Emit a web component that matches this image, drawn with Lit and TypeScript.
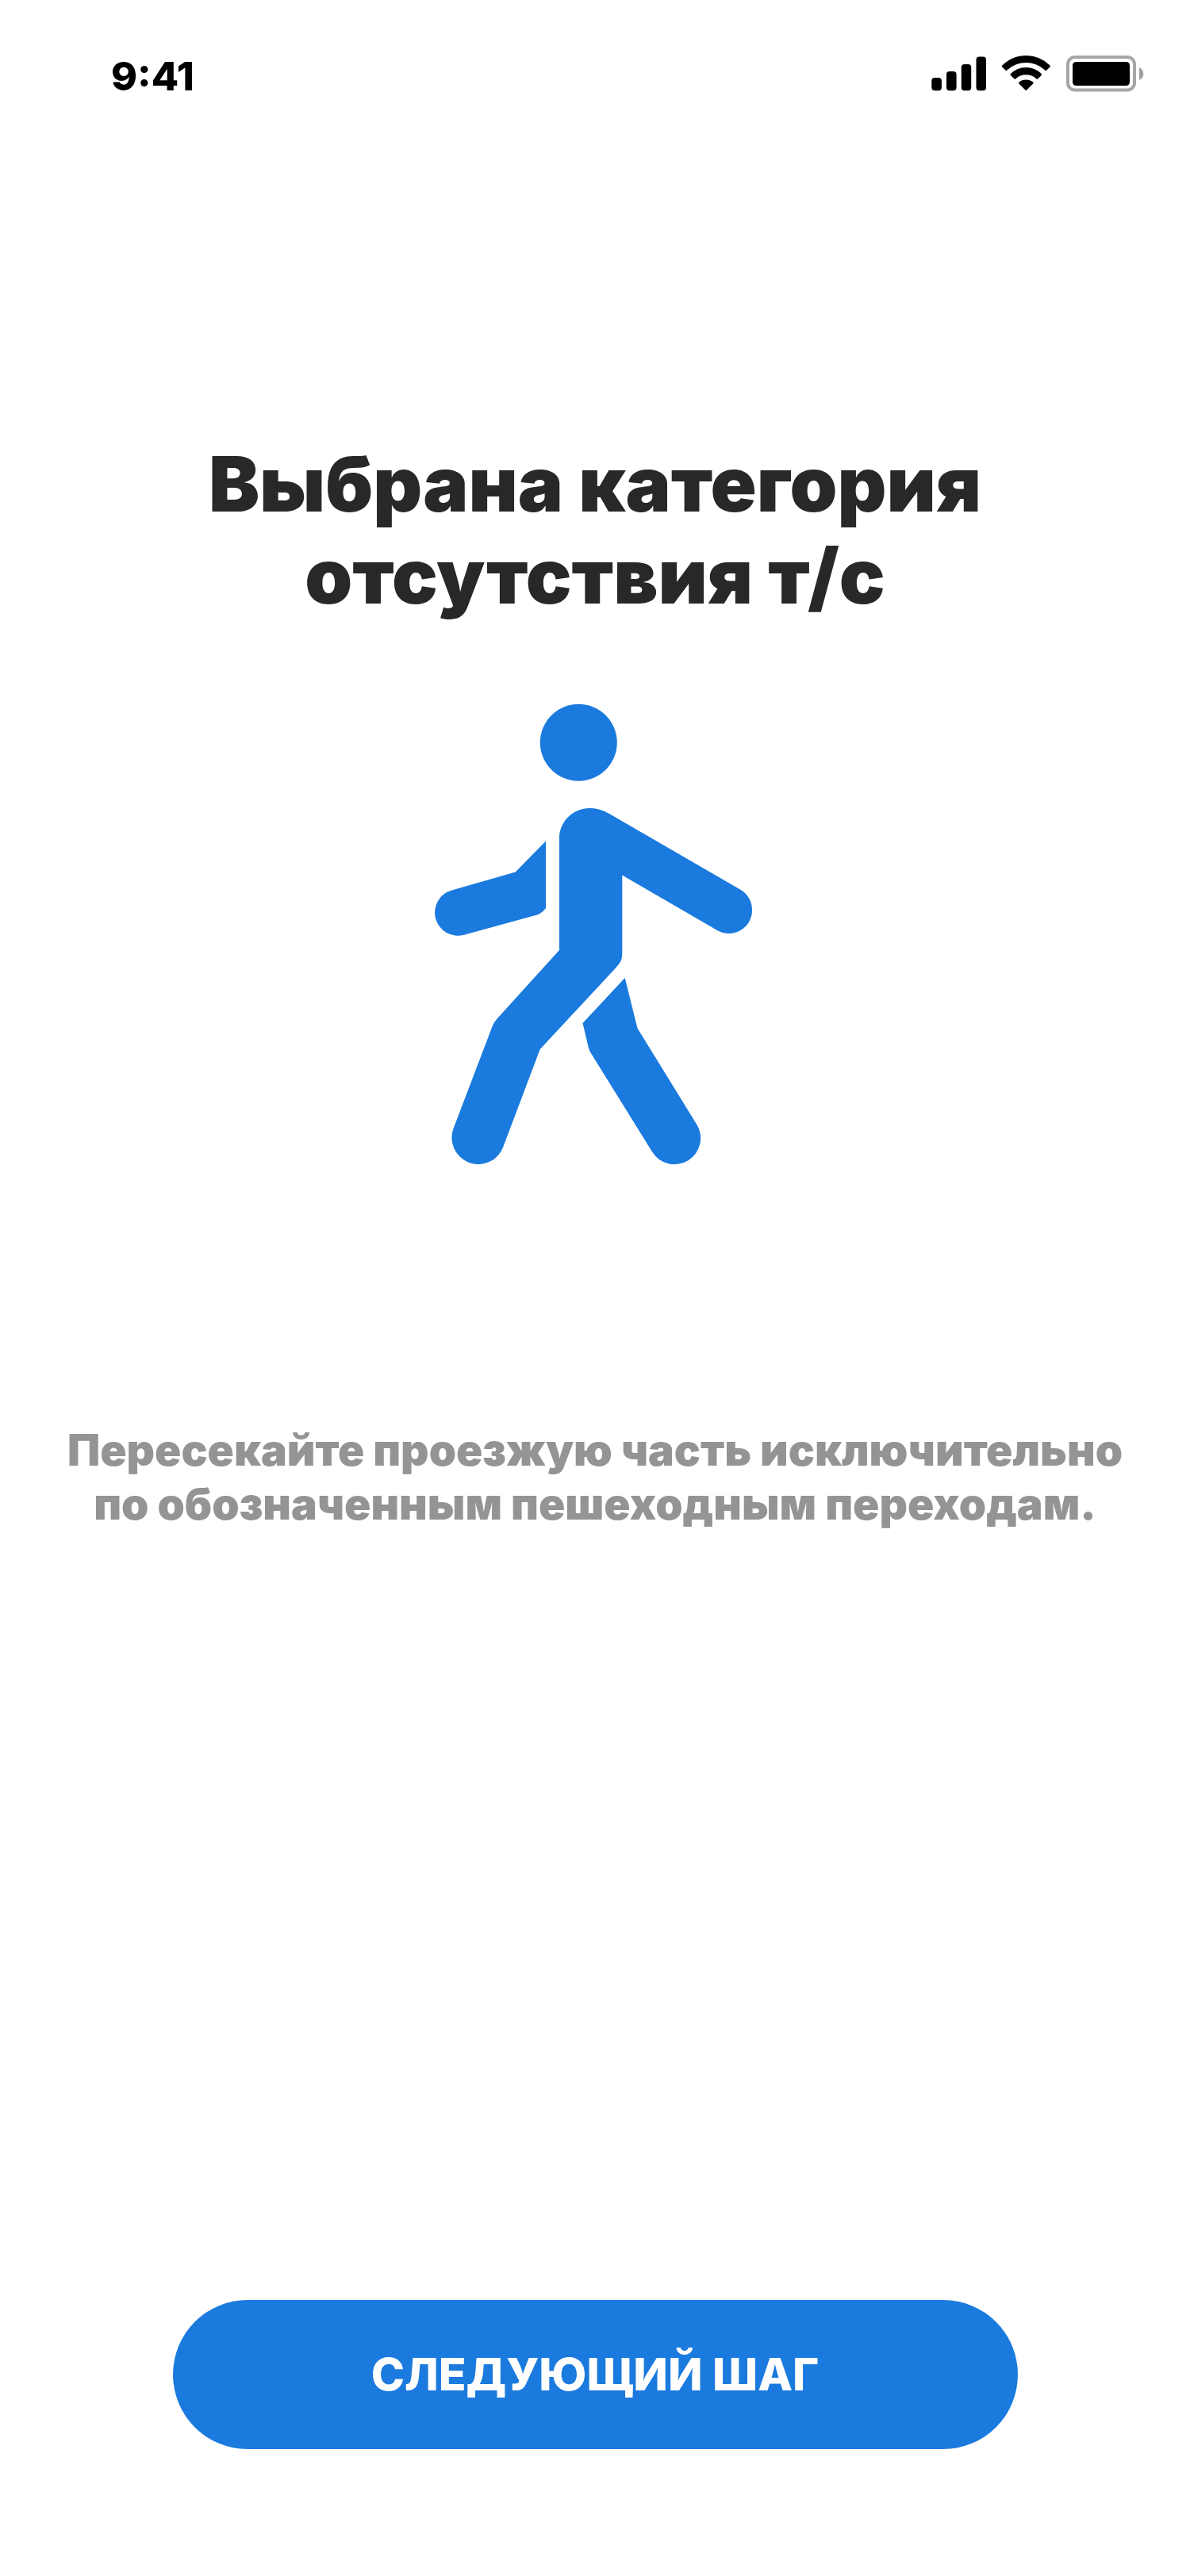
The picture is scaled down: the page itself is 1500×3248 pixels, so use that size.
import { LitElement, html, css } from "lit";
import { customElement } from "lit/decorators.js";

@customElement("status-bar")
export class StatusBar extends LitElement {
  static styles = css`
    :host {
      display: block;
    }
    .bar {
      display: flex;
      align-items: center;
      justify-content: space-between;
      padding: 60px 58px 0 140px;
      color: #000;
    }
    .time {
      font-size: 50px;
      line-height: 72px;
      font-weight: 800;
    }
    .icons {
      display: block;
      width: 268px;
      height: 47px;
      margin-bottom: 8px;
    }
  `;

  render() {
    return html`
      <div class="bar">
        <time class="time">9:41</time>
        <svg class="icons" viewBox="24 18 268 47" aria-hidden="true">
          <rect x="24.3" y="47" width="12.6" height="16.3" rx="4" />
          <rect x="43" y="39" width="12.6" height="24.3" rx="4" />
          <rect x="61.8" y="30" width="12.4" height="33.3" rx="4" />
          <rect x="80.5" y="20.4" width="12.5" height="42.9" rx="4" />
          <path d="M113.3 31.4Q126 19 143.3 19Q160.6 19 173.4 31.4Q174.4 32.4 173.4 33.4L169.3 37.5Q168.3 38.5 167.3 37.5Q157 28 143.3 28Q129.6 28 119.4 37.5Q118.4 38.5 117.4 37.5L113.3 33.4Q112.3 32.4 113.3 31.4Z" />
          <path d="M124 42Q132 34 143.3 34Q154.6 34 162.7 42Q163.7 43 162.7 44L158.3 48.2Q157.3 49.2 156.3 48.2Q151 43.2 143.3 43.2Q135.6 43.2 130.4 48.2Q129.4 49.2 128.4 48.2L124 44Q123 43 124 42Z" />
          <path d="M134.5 52.5Q138 49.6 143.3 49.6Q148.6 49.6 152.2 52.5Q153.2 53.5 152.2 54.5L144.2 62.5Q143.3 63.3 142.4 62.5L134.5 54.5Q133.5 53.5 134.5 52.5Z" />
          <rect x="196" y="21" width="84" height="41.5" rx="9" fill="none" stroke="#a6a6a6" stroke-width="4" />
          <rect x="202" y="27" width="72" height="30" rx="4.5" />
          <path d="M286 34Q291.3 36.5 291.3 42Q291.3 47.5 286 50Z" fill="#a0a0a0" />
        </svg>
      </div>
    `;
  }
}

@customElement("walking-figure")
export class WalkingFigure extends LitElement {
  static styles = css`
    :host {
      display: block;
    }
    .figure {
      display: block;
      width: 406px;
      height: 583px;
      fill: #1a7ade;
    }
  `;

  render() {
    return html`
      <svg class="figure" viewBox="17 17 406 583" aria-hidden="true">
        <circle cx="199.3" cy="66.3" r="48.5" />
        <path d="M175 187C175 166 192 149 213.5 149C222 149 229.5 151 238 156L402.5 251.2A29.2 29.2 0 0 1 418 277.5A29.2 29.2 0 0 1 374 303L254.3 233.5V329C254.3 341 253 342.5 246 350.5Q243 354 240 357L150.7 453L104.3 576A33.3 33.3 0 0 1 41.5 553L91 423Q93 418.5 97 414L175 328Z" />
        <path d="M158 190.5V275Q153 281.5 147 283.5L55 308.7A29 29 0 0 1 39.5 252.5L119.7 229.6Z" />
        <path d="M257.7 363L273.5 426.5L348.4 548A33 33 0 0 1 292.2 582.6L214 456.5Q212.3 453.5 211.5 449.5L204.5 420Z" />
      </svg>
    `;
  }
}

@customElement("app-root")
export class AppRoot extends LitElement {
  static styles = css`
    :host {
      display: block;
      font-family: Inter, "Noto Sans", "Liberation Sans", sans-serif;
      background: #fff;
    }
    .screen {
      box-sizing: border-box;
      min-height: 100vh;
      display: flex;
      flex-direction: column;
      padding-bottom: 160px;
    }
    .content {
      flex: 1;
      display: flex;
      flex-direction: column;
      align-items: center;
      padding: 420px 40px 96px;
      text-align: center;
    }
    .title {
      margin: 0 0 103px;
      max-width: 1100px;
      font-size: 96px;
      line-height: 116px;
      font-weight: 900;
      color: #282828;
    }
    .hint {
      margin: 324px 0 0;
      font-size: 55px;
      line-height: 68px;
      font-weight: 900;
      color: #949494;
    }
    .next {
      align-self: center;
      width: 71%;
      min-height: 188px;
      border: 0;
      border-radius: 94px;
      padding: 0 40px;
      background: #1a7ade;
      color: #fff;
      font-family: inherit;
      font-size: 57px;
      line-height: 68px;
      font-weight: 800;
      text-transform: uppercase;
      cursor: pointer;
    }
  `;

  render() {
    return html`
      <div class="screen">
        <status-bar></status-bar>
        <main class="content">
          <h1 class="title">Выбрана категория<br />отсутствия т/с</h1>
          <walking-figure></walking-figure>
          <p class="hint">
            Пересекайте проезжую часть исключительно<br />по обозначенным
            пешеходным переходам.
          </p>
        </main>
        <button class="next" type="button">Следующий шаг</button>
      </div>
    `;
  }
}
